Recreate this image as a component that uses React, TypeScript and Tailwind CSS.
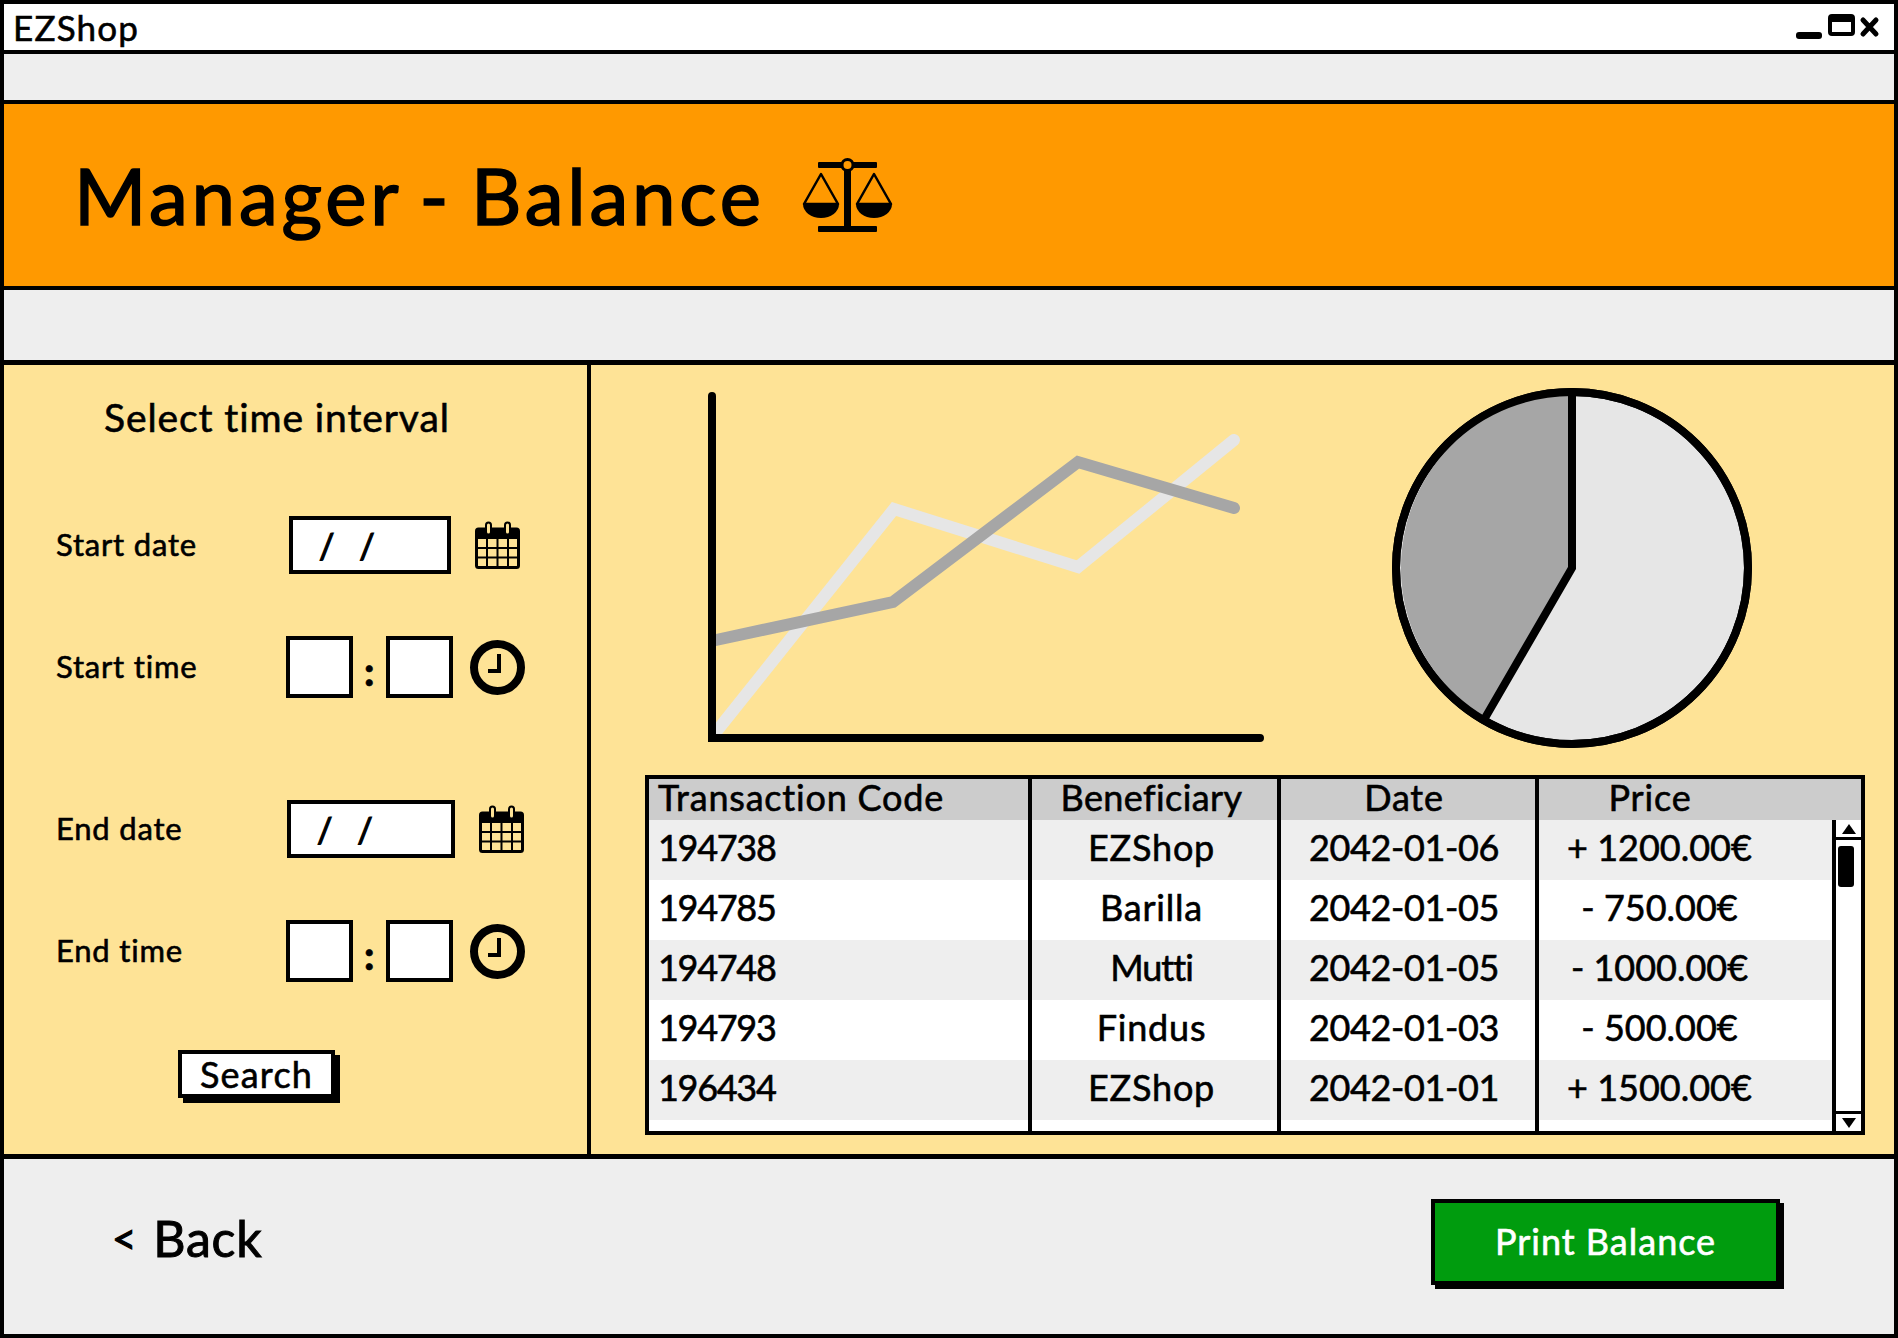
const font = "[font-family:Lato,'Open_Sans',sans-serif]";

const rows = [
  { code: '194738', who: 'EZShop', date: '2042-01-06', price: '+ 1200.00€' },
  { code: '194785', who: 'Barilla', date: '2042-01-05', price: '- 750.00€' },
  { code: '194748', who: 'Mutti', date: '2042-01-05', price: '- 1000.00€' },
  { code: '194793', who: 'Findus', date: '2042-01-03', price: '- 500.00€' },
  { code: '196434', who: 'EZShop', date: '2042-01-01', price: '+ 1500.00€' },
];

function ScaleIcon() {
  return (
    <svg width="92" height="76" viewBox="0 0 92 76" className="ml-[37px]">
      <rect x="16" y="5" width="59" height="6" rx="1" fill="#000" />
      <rect x="42" y="8" width="7" height="62" fill="#000" />
      <rect x="16" y="69" width="59" height="6" rx="1" fill="#000" />
      <circle cx="45.5" cy="8" r="5.5" fill="#ff9900" stroke="#000" strokeWidth="3" />
      <path d="M2 47 L19 17 L36 47 Z" fill="none" stroke="#000" strokeWidth="2.5" strokeLinejoin="round" />
      <path d="M1 47 H37 A18 14 0 0 1 1 47 Z" fill="#000" />
      <path d="M55 47 L72 17 L89 47 Z" fill="none" stroke="#000" strokeWidth="2.5" strokeLinejoin="round" />
      <path d="M54 47 H90 A18 14 0 0 1 54 47 Z" fill="#000" />
    </svg>
  );
}

function CalendarIcon() {
  return (
    <svg width="45" height="48" viewBox="0 0 45 48" fill="none">
      <rect x="1.5" y="8" width="42" height="38.5" rx="2" fill="#fee396" stroke="#000" strokeWidth="3" />
      <rect x="1" y="8" width="43" height="10" rx="2" fill="#000" />
      <rect x="11" y="1.5" width="5" height="12" rx="2.5" fill="#fee396" stroke="#000" strokeWidth="2" />
      <rect x="30" y="1.5" width="5" height="12" rx="2.5" fill="#fee396" stroke="#000" strokeWidth="2" />
      <path d="M2 27 H43 M2 36.500 H43 M12 18 V46 M22.500 18 V46 M33 18 V46" stroke="#000" strokeWidth="2" />
    </svg>
  );
}

function ClockIcon() {
  return (
    <svg width="55" height="55" viewBox="0 0 55 55" fill="none">
      <circle cx="27.5" cy="27.5" r="23.5" stroke="#000" strokeWidth="8" />
      <path d="M29 14 V31 H18" stroke="#000" strokeWidth="4" />
    </svg>
  );
}

function DateRow({ label, boxClass, iconGap }: { label: string; boxClass: string; iconGap: string }) {
  return (
    <div className="flex h-[64px] items-center">
      <span className="w-[230px] pb-[2px] text-[31px] text-black">{label}</span>
      <div className={`flex h-[58px] items-center gap-[24px] border-4 border-black bg-white pl-[26px] text-[34px] [-webkit-text-stroke:1.2px] ${boxClass}`}>
        <span>/</span>
        <span>/</span>
      </div>
      <div className={iconGap}>
        <CalendarIcon />
      </div>
    </div>
  );
}

function TimeRow({ label }: { label: string }) {
  return (
    <div className="flex h-[64px] items-center">
      <span className="w-[230px] pb-[2px] text-[31px] text-black">{label}</span>
      <div className="h-[62px] w-[67px] border-4 border-black bg-white" />
      <span className="flex w-[33px] justify-center pt-[8px] text-[40px] font-black leading-none">:</span>
      <div className="h-[62px] w-[67px] border-4 border-black bg-white" />
      <div className="ml-[17px]">
        <ClockIcon />
      </div>
    </div>
  );
}

function Scrollbar() {
  return (
    <div className="flex w-[29px] flex-col border-l-4 border-black bg-white">
      <div className="flex h-[20px] items-center justify-center border-b-[3px] border-black">
        <svg width="14" height="10" viewBox="0 0 14 10"><path d="M7 0 L14 10 H0 Z" fill="#000" /></svg>
      </div>
      <div className="ml-[2px] mt-[6px] h-[41px] w-[16px] rounded-[3px] bg-black" />
      <div className="mt-auto flex h-[20px] items-center justify-center border-t-[3px] border-black">
        <svg width="14" height="10" viewBox="0 0 14 10"><path d="M7 10 L14 0 H0 Z" fill="#000" /></svg>
      </div>
    </div>
  );
}

function TxTable() {
  const cols = 'grid grid-cols-[383px_249px_258px_1fr]';
  const cell = 'flex items-center justify-center border-r-4 border-black pb-[7px]';
  return (
    <div className="ml-[54px] mt-[20px] w-[1220px] border-[4px] border-black bg-white text-[36px] leading-none text-black">
      <div className={`${cols} h-[41px] bg-[#cccccc]`}>
        <div className="flex items-center border-r-4 border-black pb-[7px] pl-[9px]">Transaction Code</div>
        <div className={`${cell} pr-[6px] tracking-[0.4px]`}>Beneficiary</div>
        <div className={`${cell} pr-[8px]`}>Date</div>
        <div className="flex items-center justify-center pb-[7px] pr-[100px]">Price</div>
      </div>
      <div className="flex">
        <div className="flex-1">
          {rows.map((r, i) => (
            <div key={r.code} className={`${cols} h-[60px] ${i % 2 === 0 ? 'bg-[#eeeeee]' : 'bg-white'}`}>
              <div className="flex items-center border-r-4 border-black pb-[7px] pl-[9px] tracking-[-1.3px]">{r.code}</div>
              <div className={`${cell} pr-[6px] ${r.who === 'Mutti' ? 'tracking-[-1px]' : ''}`}>{r.who}</div>
              <div className={`${cell} pr-[8px] tracking-[-0.4px]`}>{r.date}</div>
              <div className="flex items-center justify-center pb-[7px] pr-[52px] tracking-normal">{r.price}</div>
            </div>
          ))}
          <div className={`${cols} h-[11px]`}>
            <div className="border-r-4 border-black" />
            <div className="border-r-4 border-black" />
            <div className="border-r-4 border-black" />
            <div />
          </div>
        </div>
        <Scrollbar />
      </div>
    </div>
  );
}

export default function App() {
  return (
    <div className={`flex h-[1338px] w-[1898px] flex-col overflow-hidden border-4 border-black bg-[#eeeeee] tracking-[0.8px] text-black [-webkit-text-stroke:0.6px] ${font}`}>
      {/* title bar */}
      <div className="flex h-[50px] shrink-0 items-center justify-between border-b-4 border-black bg-white pl-[9px] pr-[12px]">
        <span className="text-[35px] leading-none tracking-[1.2px]">EZShop</span>
        <svg width="86" height="28" viewBox="0 0 86 28" className="mb-[4px]">
          <rect x="0" y="21" width="26" height="7" rx="3" fill="#000" />
          <rect x="34" y="5" width="23" height="18" rx="2" fill="none" stroke="#000" strokeWidth="4" />
          <rect x="34" y="5" width="23" height="6" fill="#000" />
          <path d="M67 9 L80 23 M80 9 L67 23" stroke="#000" strokeWidth="5" strokeLinecap="round" />
        </svg>
      </div>
      <div className="h-[46px] shrink-0" />

      {/* header */}
      <div className="flex h-[190px] shrink-0 items-center border-y-4 border-black bg-[#ff9900] pl-[70px]">
        <span className="text-[78px] leading-none tracking-[3.8px] [word-spacing:-5px] [-webkit-text-stroke:1.6px]">Manager - Balance</span>
        <ScaleIcon />
      </div>
      <div className="h-[70px] shrink-0" />

      {/* main panel */}
      <div className="flex h-[799px] shrink-0 border-y-[5px] border-black bg-[#fee396]">
        <div className="w-[587px] border-r-4 border-black pl-[52px] pt-[28px]">
          <div className="ml-[48px] h-[48px] text-[39px] leading-[48px] tracking-[0.9px]">Select time interval</div>
          <div className="mt-[72px]">
            <DateRow label="Start date" boxClass="ml-[3px] w-[162px]" iconGap="ml-[24px]" />
          </div>
          <div className="mt-[58px]">
            <TimeRow label="Start time" />
          </div>
          <div className="mt-[98px]">
            <DateRow label="End date" boxClass="ml-[1px] w-[168px]" iconGap="ml-[24px]" />
          </div>
          <div className="mt-[58px]">
            <TimeRow label="End time" />
          </div>
          <button className="ml-[122px] mt-[67px] flex h-[48px] w-[157px] items-center justify-center border-4 border-black bg-white text-[36px] leading-none tracking-[1.2px] shadow-[5px_5px_0_#000]">
            Search
          </button>
        </div>

        <div className="flex-1 pt-[20px]">
          <div className="flex h-[370px]">
            <svg width="570" height="370" viewBox="700 385 570 370" className="ml-[109px]">
              <polyline points="716,732 894,509 1078,567 1234,440" fill="none" stroke="#e6e6e6" strokeWidth="12" strokeLinecap="round" />
              <polyline points="716,640 893,602 1078,462 1234,508" fill="none" stroke="#a6a6a6" strokeWidth="12" strokeLinecap="round" />
              <path d="M712 396 V738 H1260" fill="none" stroke="#000" strokeWidth="8" strokeLinecap="round" />
            </svg>
            <svg width="375" height="370" viewBox="1385 385 375 370" className="ml-[115px]">
              <circle cx="1572" cy="568" r="176" fill="#e6e6e6" stroke="#000" strokeWidth="8" />
              <path d="M1572 392 V568 L1485 718 A176 176 0 0 1 1572 392 Z" fill="#a6a6a6" />
              <circle cx="1572" cy="568" r="176" fill="none" stroke="#000" strokeWidth="8" />
              <path d="M1572 392 V568 L1485 718" fill="none" stroke="#000" strokeWidth="8" />
            </svg>
          </div>
          <TxTable />
        </div>
      </div>

      {/* footer */}
      <div className="flex flex-1 items-start justify-between pl-[108px] pr-[114px] pt-[40px]">
        <div className="flex h-[78px] items-center gap-[16px] leading-none">
          <span className="text-[42px] [-webkit-text-stroke:1.2px]">&lt;</span>
          <span className="text-[50px] [-webkit-text-stroke:1px]">Back</span>
        </div>
        <button className="flex h-[86px] w-[349px] items-center justify-center border-4 border-black bg-[#009c0e] pb-[2px] text-[36px] leading-none tracking-[1px] text-white shadow-[4px_4px_0_#000]">
          Print Balance
        </button>
      </div>
    </div>
  );
}
